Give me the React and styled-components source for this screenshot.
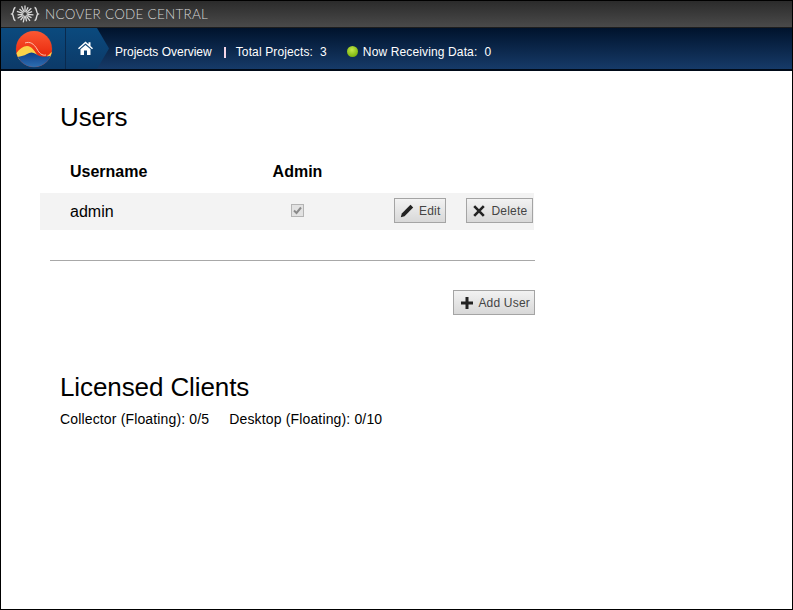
import React from "react";
import styled, { createGlobalStyle } from "styled-components";

const Global = createGlobalStyle`
  html, body { margin: 0; padding: 0; background: #fff; }
  body { font-family: "Liberation Sans", Arial, sans-serif; color: #000; }
`;

const Frame = styled.div`
  width: 793px;
  height: 610px;
  box-sizing: border-box;
  border: 1px solid #000;
  overflow: hidden;
  background: #fff;
`;

const TopBar = styled.div`
  height: 27px;
  display: flex;
  align-items: center;
  padding-left: 9px;
  gap: 5px;
  background: linear-gradient(#2b2b2b, #4a4a4a);
  border-bottom: 1px solid #1e1e1e;
  box-sizing: border-box;
`;

const Brand = styled.span`
  font-family: Lato, "Open Sans", sans-serif;
  font-size: 13.5px;
  font-weight: 300;
  letter-spacing: 0.25px;
  color: #d4d4d4;
  white-space: nowrap;
`;

const Nav = styled.div`
  height: 43px;
  display: flex;
  align-items: stretch;
  background: linear-gradient(#00132c, #163a68);
  border-bottom: 2px solid #000a18;
  box-sizing: border-box;
`;

const LogoCell = styled.div`
  width: 65px;
  display: flex;
  align-items: center;
  justify-content: center;
  background: linear-gradient(#0b4a7e, #0c3a68);
  border-right: 1px solid #0a2a4e;
  padding-left: 1px;
  box-sizing: border-box;
`;

const HomeCell = styled.div`
  width: 43px;
  display: flex;
  align-items: center;
  justify-content: center;
  padding: 0 5px 2px 0;
  box-sizing: border-box;
  background: linear-gradient(#0b4a7e, #0c3a68);
  clip-path: polygon(0 0, 31px 0, 43px 50%, 31px 100%, 0 100%);
  margin-right: 6px;
`;

const NavText = styled.span`
  font-size: 12px;
  padding-top: 2px;
  color: #fff;
  white-space: nowrap;
  display: inline-flex;
  align-items: center;
  letter-spacing: ${(p) => (p.$wide ? "0.13px" : "0")};
`;

const NavValue = styled.span`
  margin-left: ${(p) => p.$gap}px;
`;

const NavItems = styled.div`
  display: flex;
  align-items: center;
  padding-top: 5px;
`;

const Sep = styled.span`
  width: 2px;
  height: 11px;
  margin: 2px 10px 0 12px;
  background: #f4d6e6;
`;

const Dot = styled.span`
  width: 11px;
  height: 11px;
  border-radius: 50%;
  margin: 0 5px 0 20px;
  background: radial-gradient(circle at 45% 35%, #c4e84a, #7cb30e 75%);
`;

const Main = styled.div`
  padding: 31px 0 0 39px;
  width: 495px;
`;

const Title = styled.h1`
  margin: 0 0 0 20px;
  font-size: 26px;
  line-height: 30px;
  font-weight: 400;
  letter-spacing: -0.1px;
`;

const HeadRow = styled.div`
  display: flex;
  height: 42px;
  margin-top: 19px;
  align-items: center;
  box-sizing: border-box;
  font-size: 16px;
  font-weight: 700;
`;

const UserCol = styled.div`
  width: 233px;
  padding-left: 30px;
  box-sizing: border-box;
`;

const AdminCol = styled.div`
  width: 49px;
  display: flex;
  justify-content: center;
  flex: none;
  white-space: nowrap;
`;

const UserRow = styled.div`
  display: flex;
  align-items: center;
  height: 37px;
  margin-right: 1px;
  background: #f3f3f3;
  font-size: 16px;
`;

const Actions = styled.div`
  display: flex;
  margin: 0 0 2px 72px;
  gap: 20px;
`;

const CheckBox = styled.span`
  width: 11px;
  height: 11px;
  margin-bottom: 2px;
  border: 1px solid #b4b4b4;
  background: #e2e2e2;
  display: flex;
  align-items: center;
  justify-content: center;
`;

const Button = styled.button`
  height: 25px;
  padding: 0 ${(p) => p.$right || 4}px 0 ${(p) => p.$left || 6}px;
  display: inline-flex;
  align-items: center;
  gap: ${(p) => p.$gap || 5}px;
  box-sizing: border-box;
  border: 1px solid #a4a4a4;
  border-radius: 0;
  background: linear-gradient(#f2f2f2, #d8d8d8);
  color: #444;
  font-family: inherit;
  font-size: 12px;
  letter-spacing: 0.2px;
`;

const Rule = styled.hr`
  margin: 30px 0 0 10px;
  border: 0;
  border-top: 1px solid #a8a8a8;
`;

const ButtonRow = styled.div`
  display: flex;
  justify-content: flex-end;
  margin-top: 29px;
`;

const ClientsTitle = styled(Title)`
  margin-top: 57px;
`;

const Clients = styled.div`
  display: flex;
  gap: 20px;
  margin: 9px 0 0 20px;
  font-size: 14px;
  line-height: 16px;
  letter-spacing: 0.15px;
  white-space: nowrap;
`;

const RAYS = [0, 24, 48, 72, 96, 120, 144, 168, 192, 216, 240, 264, 288, 312, 336];

const BrandMark = () => (
  <svg width="30" height="18" viewBox="0 0 30 18" fill="none" stroke="#dcdcdc">
    <path d="M5.5 2.5C2.8 2.5 4.2 8 2 9C4.2 10 2.8 15.5 5.5 15.5" strokeWidth="1.4" />
    <path d="M24.5 2.5C27.2 2.5 25.8 8 28 9C25.8 10 27.2 15.5 24.5 15.5" strokeWidth="1.4" />
    <g strokeWidth="1.3">
      {RAYS.map((a, i) => (
        <line key={a} x1="15" y1="6.2" x2="15" y2={i % 2 ? 1.5 : 0.5} transform={`rotate(${a} 15 9)`} />
      ))}
    </g>
    <circle cx="15" cy="9" r="2.4" strokeWidth="1" />
  </svg>
);

const Logo = () => (
  <svg width="38" height="38" viewBox="0 0 38 38">
    <defs>
      <linearGradient id="logoRed" x1="0" y1="0" x2="0" y2="1">
        <stop offset="0" stopColor="#fb5a34" />
        <stop offset="0.6" stopColor="#ec2f12" />
      </linearGradient>
      <linearGradient id="logoBlue" x1="0" y1="0" x2="0" y2="1">
        <stop offset="0" stopColor="#0f3f8a" />
        <stop offset="1" stopColor="#2f72b4" />
      </linearGradient>
      <clipPath id="logoClip">
        <circle cx="19" cy="19" r="18" />
      </clipPath>
    </defs>
    <circle cx="19" cy="19" r="18.5" fill="#1f4f78" />
    <g clipPath="url(#logoClip)">
      <rect width="38" height="38" fill="url(#logoRed)" />
      <path d="M0 25C4 19 8 16 12 16C17 16 20 22 23 26L12 30H0Z" fill="#fbd24a" />
      <path d="M32 26C34 25 35 23 38 21V28H32Z" fill="#fbd24a" />
      <path d="M0 27C4 27 9 26 12 24C15 22 18 22 21 24C25 27 30 28 38 25V38H0Z" fill="url(#logoBlue)" />
      <path d="M10 13C15 11 19 14 22 19C24 23 27 26 31 25" fill="none" stroke="#ffc4ae" strokeWidth="1" />
    </g>
  </svg>
);

const HomeIcon = () => (
  <svg width="15" height="14" viewBox="0 0 15 14" fill="#fff">
    <path d="M7.5 0.5L0 7.2L1 8.2L7.5 2.6L14 8.2L15 7.2L12.5 5V1.2H10.5V3.2Z" />
    <path d="M2.5 8.2L7.5 3.9L12.5 8.2V14H9V9.5H6V14H2.5Z" />
  </svg>
);

const PencilIcon = () => (
  <svg width="14" height="14" viewBox="0 0 14 14" fill="#222">
    <path d="M10.5 0.8L13.2 3.5L4.5 12.2L0.8 13.2L1.8 9.5Z" />
  </svg>
);

const CrossIcon = () => (
  <svg width="12" height="12" viewBox="0 0 12 12" stroke="#222" strokeWidth="2.6">
    <path d="M1.2 1.2L10.8 10.8M10.8 1.2L1.2 10.8" />
  </svg>
);

const PlusIcon = () => (
  <svg width="12" height="12" viewBox="0 0 12 12" fill="#222">
    <path d="M4.5 0H7.5V4.5H12V7.5H7.5V12H4.5V7.5H0V4.5H4.5Z" />
  </svg>
);

const CheckIcon = () => (
  <svg width="9" height="9" viewBox="0 0 9 9" fill="none" stroke="#8a8a8a" strokeWidth="2">
    <path d="M1 4.5L3.5 7L8 1.5" />
  </svg>
);

export default function App() {
  return (
    <Frame>
      <Global />
      <TopBar>
        <BrandMark />
        <Brand>NCOVER CODE CENTRAL</Brand>
      </TopBar>
      <Nav>
        <LogoCell>
          <Logo />
        </LogoCell>
        <HomeCell>
          <HomeIcon />
        </HomeCell>
        <NavItems>
          <NavText>Projects Overview</NavText>
          <Sep />
          <NavText $wide>
            Total Projects:<NavValue $gap={7}>3</NavValue>
          </NavText>
          <Dot />
          <NavText $wide>
            Now Receiving Data:<NavValue $gap={7}>0</NavValue>
          </NavText>
        </NavItems>
      </Nav>
      <Main>
        <Title>Users</Title>
        <HeadRow>
          <UserCol>Username</UserCol>
          <AdminCol>Admin</AdminCol>
        </HeadRow>
        <UserRow>
          <UserCol>admin</UserCol>
          <AdminCol>
            <CheckBox>
              <CheckIcon />
            </CheckBox>
          </AdminCol>
          <Actions>
            <Button $left={5} $right={5}>
              <PencilIcon />
              Edit
            </Button>
            <Button $right={5} $gap={6}>
              <CrossIcon />
              Delete
            </Button>
          </Actions>
        </UserRow>
        <Rule />
        <ButtonRow>
          <Button $left={7}>
            <PlusIcon />
            Add User
          </Button>
        </ButtonRow>
        <ClientsTitle>Licensed Clients</ClientsTitle>
        <Clients>
          <span>Collector (Floating): 0/5</span>
          <span>Desktop (Floating): 0/10</span>
        </Clients>
      </Main>
    </Frame>
  );
}
